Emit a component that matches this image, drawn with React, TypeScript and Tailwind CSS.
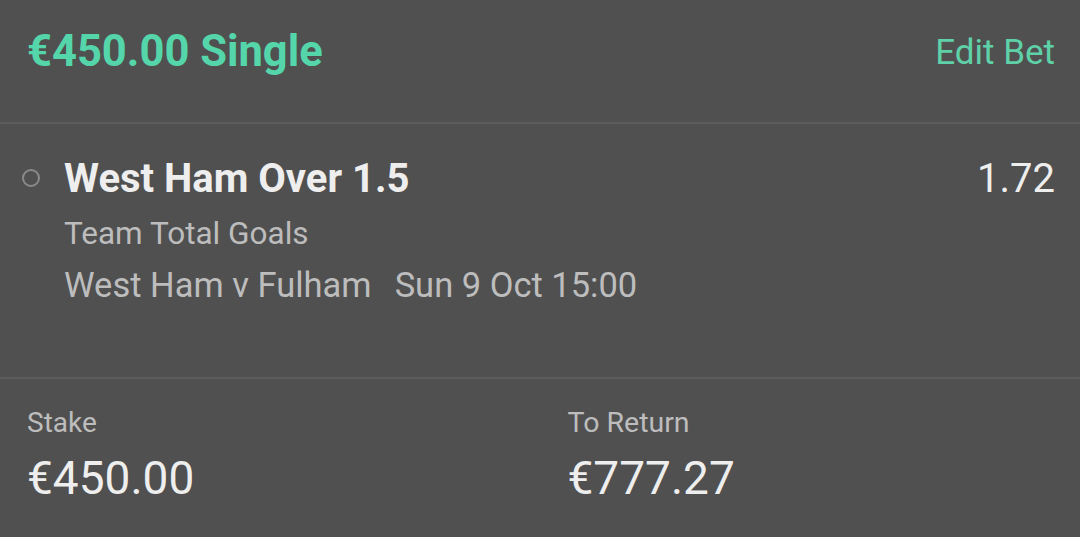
import React from "react";

export default function App() {
  return (
    <div
      className="w-[1080px] h-[537px] bg-[#505050] overflow-hidden flex flex-col"
      style={{ fontFamily: "Roboto, 'Noto Sans', sans-serif" }}
    >
      <div className="h-[122px] flex items-start justify-between pl-[27px] pr-[25px] pt-[27px] shrink-0">
        <div className="text-[43.5px] leading-[50px] font-bold text-[#55d6aa]">€450.00 Single</div>
        <div className="text-[35px] leading-[48px] pt-[2px] text-[#5fd1a8]">Edit Bet</div>
      </div>
      <div className="h-[2px] bg-[#5c5c5c] shrink-0" />
      <div className="h-[253px] shrink-0 flex pt-[31px] pl-[22px] pr-[25px]">
        <div className="w-[18px] h-[18px] mt-[14px] rounded-full border-2 border-[#8a8a8a] shrink-0" />
        <div className="ml-[24px] flex-1 flex flex-col">
          <div className="text-[40px] leading-[48px] font-bold text-[#eeeeee]">West Ham Over 1.5</div>
          <div className="mt-[12px] text-[31.5px] leading-[38px] text-[#bdbdbd]">Team Total Goals</div>
          <div className="mt-[12px] text-[34.5px] leading-[40px] text-[#bdbdbd] flex gap-[23px]">
            <span>West Ham v Fulham</span>
            <span>Sun 9 Oct 15:00</span>
          </div>
        </div>
        <div className="text-[40px] leading-[48px] text-[#eeeeee]">1.72</div>
      </div>
      <div className="h-[2px] bg-[#5c5c5c] shrink-0" />
      <div className="flex-1 grid grid-cols-2 pl-[27px] pt-[26px]">
        <div className="flex flex-col">
          <div className="text-[28px] leading-[36px] text-[#bdbdbd]">Stake</div>
          <div className="mt-[10px] text-[46px] leading-[54px] text-[#eeeeee]">€450.00</div>
        </div>
        <div className="flex flex-col pl-[14px]">
          <div className="text-[28.5px] leading-[36px] text-[#bdbdbd]">To Return</div>
          <div className="mt-[10px] text-[46px] leading-[54px] text-[#eeeeee]">€777.27</div>
        </div>
      </div>
    </div>
  );
}
